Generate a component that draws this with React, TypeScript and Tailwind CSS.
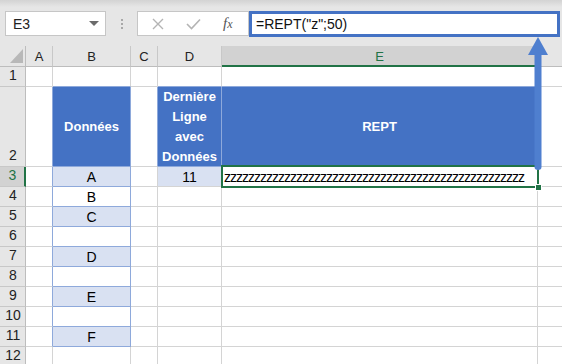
import React from "react";

const COLS = [26, 27, 78, 27, 64, 316, 40];
const LETTERS = ["", "A", "B", "C", "D", "E", ""];
const ROW_H = [20, 80, 20, 20, 20, 20, 20, 20, 20, 20, 20, 20];
const B_VALS: Record<number, string> = { 3: "A", 4: "B", 5: "C", 7: "D", 9: "E", 11: "F" };

const GRID = "#d4d4d4";
const BLUE_B = "#8ea9db";

function Cell({
  w,
  h,
  bg,
  br,
  bb,
  children,
  className = "",
}: {
  w: number;
  h: number;
  bg?: string;
  br?: string;
  bb?: string;
  children?: React.ReactNode;
  className?: string;
}) {
  return (
    <div
      className={"shrink-0 border-r border-b box-border " + className}
      style={{ width: w, height: h, background: bg ?? "#ffffff", borderRightColor: br ?? GRID, borderBottomColor: bb ?? GRID }}
    >
      {children}
    </div>
  );
}

function FormulaBar() {
  return (
    <div className="h-[46px] flex items-start pt-[11px] bg-[linear-gradient(to_bottom,#d3d3d3,#e6e6e6_7px,#e6e6e6)]">
      <div className="ml-[5px] w-[101px] h-[25px] bg-white border border-[#c6c6c6] flex items-center justify-between pl-[7px] pr-[6px] box-border">
        <span className="text-[14px] text-[#222] leading-none">E3</span>
        <svg width="10" height="6" viewBox="0 0 10 6">
          <path d="M0 0 L10 0 L5 5 Z" fill="#6b6b6b" />
        </svg>
      </div>
      <div className="w-[31px] h-[25px] flex flex-col items-center justify-center gap-[2px]">
        <div className="w-[2px] h-[2px] bg-[#a8a8a8]" />
        <div className="w-[2px] h-[2px] bg-[#a8a8a8]" />
        <div className="w-[2px] h-[2px] bg-[#a8a8a8]" />
      </div>
      <div className="w-[112px] h-[25px] bg-white border border-[#c6c6c6] box-border flex items-center">
        <svg className="ml-[14px]" width="12" height="12" viewBox="0 0 12 12">
          <path d="M1 1 L11 11 M11 1 L1 11" stroke="#b4b4b4" strokeWidth="1.4" fill="none" />
        </svg>
        <svg className="ml-[22px]" width="15" height="12" viewBox="0 0 15 12">
          <path d="M1 6 L5.5 10.5 L14 1.5" stroke="#b4b4b4" strokeWidth="1.6" fill="none" />
        </svg>
        <span className="ml-[22px] text-[15px] italic text-[#555] font-['Liberation_Serif',serif] leading-none">
          f<span className="text-[12px]">x</span>
        </span>
      </div>
      <div className="w-[311px] h-[26px] border-[3px] border-[#4472c4] bg-white box-border flex items-center pl-[4px]">
        <span className="text-[14px] text-[#111] leading-none">=REPT("z";50)</span>
      </div>
    </div>
  );
}

function HeaderRow() {
  return (
    <div className="flex">
      {COLS.map((w, i) => {
        if (i === 0) {
          return (
            <div
              key={i}
              className="relative shrink-0 h-[21px] bg-[#e6e6e6] border-r border-b border-r-[#bdbdbd] border-b-[#bdbdbd] box-border"
              style={{ width: w }}
            >
              <svg className="absolute left-[10px] top-[3px]" width="13" height="14" viewBox="0 0 13 14">
                <path d="M13 0 L13 14 L0 14 Z" fill="#b8b8b8" />
              </svg>
            </div>
          );
        }
        const sel = i === 5;
        return (
          <div
            key={i}
            className={
              "shrink-0 h-[21px] box-border flex items-center justify-center text-[13px] leading-none " +
              (sel
                ? "bg-[#d2d2d2] text-[#217346] border-b-2 border-b-[#217346] border-r border-r-[#bdbdbd]"
                : "bg-[#e6e6e6] text-[#222] border-r border-b border-r-[#c8c8c8] border-b-[#bdbdbd]")
            }
            style={{ width: w }}
          >
            <span className={sel ? "mt-[1px]" : ""}>{LETTERS[i]}</span>
          </div>
        );
      })}
    </div>
  );
}

function Row({ r }: { r: number }) {
  const h = ROW_H[r - 1];
  const selRow = r === 3;
  const bBand = r >= 3 && r <= 11 && r % 2 === 1;
  const bCells = r >= 2 && r <= 11;

  return (
    <div className="flex">
      {/* row header */}
      <div
        className={
          "shrink-0 box-border flex items-end justify-center pb-[4px] text-[14px] leading-none " +
          (selRow
            ? "bg-[#d2d2d2] text-[#217346] border-r-2 border-r-[#217346] border-b border-b-[#c8c8c8]"
            : "bg-[#e6e6e6] text-[#222] border-r border-b border-r-[#bdbdbd] border-b-[#c8c8c8]")
        }
        style={{ width: 26, height: h }}
      >
        <span className="pl-[1px]">{r}</span>
      </div>
      {/* A */}
      <Cell w={27} h={h} br={bCells ? BLUE_B : GRID} />
      {/* B */}
      <Cell
        w={78}
        h={h}
        bg={r === 2 ? "#4472c4" : bBand ? "#d9e1f2" : "#ffffff"}
        br={bCells ? BLUE_B : GRID}
        bb={r >= 1 && r <= 11 ? BLUE_B : GRID}
        className="flex items-center justify-center"
      >
        {r === 2 ? (
          <span className="text-white font-bold text-[13px] leading-none">Données</span>
        ) : (
          <span className="text-[14px] text-black leading-none mt-[1px]">{B_VALS[r] ?? ""}</span>
        )}
      </Cell>
      {/* C */}
      <Cell w={27} h={h} br={r === 2 ? BLUE_B : GRID} />
      {/* D */}
      <Cell
        w={64}
        h={h}
        bg={r === 2 ? "#4472c4" : r === 3 ? "#d9e1f2" : "#ffffff"}
        br={r === 2 || r === 3 ? BLUE_B : GRID}
        bb={r === 1 || r === 2 ? BLUE_B : GRID}
        className="flex items-center justify-center"
      >
        {r === 2 && (
          <div className="text-white font-bold text-[13px] leading-[20px] text-center">
            Dernière
            <br />
            Ligne
            <br />
            avec
            <br />
            Données
          </div>
        )}
        {r === 3 && <span className="text-[14px] text-black leading-none mt-[1px]">11</span>}
      </Cell>
      {/* E */}
      <Cell
        w={316}
        h={h}
        bg={r === 2 ? "#4472c4" : "#ffffff"}
        br={r === 2 ? BLUE_B : GRID}
        bb={r === 1 ? BLUE_B : GRID}
        className={"flex items-center" + (r === 3 ? " relative z-10" : "")}
      >
        {r === 2 && (
          <span className="w-full text-center text-white font-bold text-[13px] leading-none">REPT</span>
        )}
        {r === 3 && (
          <>
            <span className="pl-[2px] text-[14px] text-black leading-none tracking-[-1px] mt-[1px] whitespace-nowrap">
              {"z".repeat(50)}
            </span>
            <div className="absolute left-[-1px] top-[-2px] right-[-2px] bottom-[-2px] border-2 border-[#217346] pointer-events-none" />
            <div className="absolute right-[-5px] bottom-[-5px] w-[7px] h-[7px] bg-[#217346] border border-white" />
          </>
        )}
      </Cell>
      {/* F */}
      <Cell w={40} h={h} />
    </div>
  );
}

export default function App() {
  return (
    <div className="relative w-[562px] h-[364px] overflow-hidden bg-white font-['Liberation_Sans',Arial,sans-serif]">
      <FormulaBar />
      <HeaderRow />
      {Array.from({ length: 12 }, (_, i) => (
        <Row key={i} r={i + 1} />
      ))}
      <svg className="absolute left-[526px] top-[36px] z-20" width="24" height="136" viewBox="0 0 24 136">
        <path d="M12 1 L22 19 L2 19 Z" fill="#4f7fcf" />
        <path d="M8.5 19 L15.5 19 L15.5 131 Q15.5 134 12 134 Q8.5 134 8.5 131 Z" fill="#4f7fcf" />
      </svg>
    </div>
  );
}
